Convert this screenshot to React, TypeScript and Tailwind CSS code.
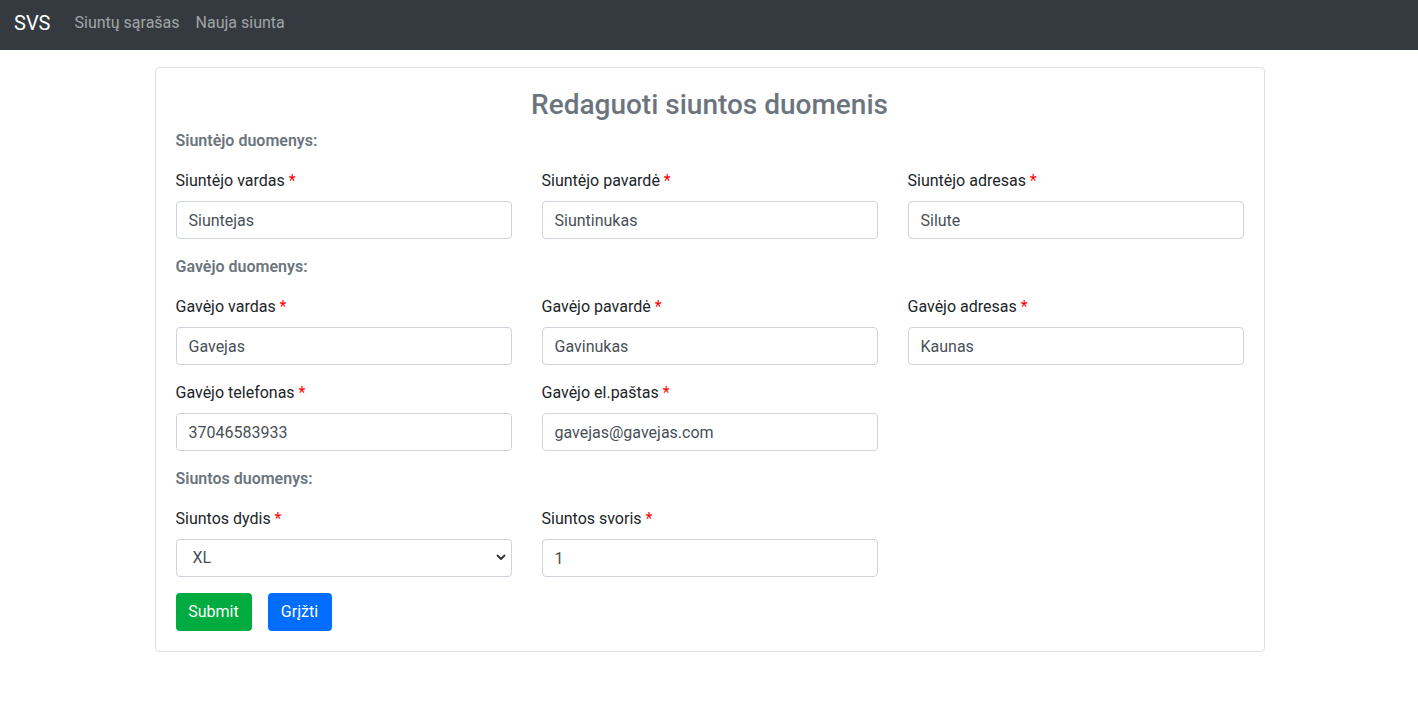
import React, { useState } from 'react';

type Field = { name: string; label: string; value: string; type?: string };

const font = { fontFamily: 'Roboto, "Liberation Sans", sans-serif' };

const Section: React.FC<{ title: string }> = ({ title }) => (
    <h6 className="mb-4 text-base leading-6 font-semibold text-[#6c757d]">{title}</h6>
);

const Input: React.FC<{ field: Field; onChange: (name: string, v: string) => void }> = ({ field, onChange }) => (
    <div>
        <label className="block mb-2 text-base leading-6 text-[#212529]">
            {field.label} <span className="text-[#ff0000]">*</span>
        </label>
        <input
            type={field.type || 'text'}
            name={field.name}
            value={field.value}
            onChange={(e) => onChange(field.name, e.target.value)}
            className="block w-full h-[38px] px-3 text-base text-[#495057] bg-white border border-[#ced4da] rounded-[4px] outline-none"
        />
    </div>
);

const App: React.FC = () => {
    const [formData, setFormData] = useState<Record<string, string>>({
        senderName: 'Siuntejas',
        senderSurname: 'Siuntinukas',
        senderAddress: 'Silute',
        receiverName: 'Gavejas',
        receiverSurname: 'Gavinukas',
        receiverAddress: 'Kaunas',
        receiverPhone: '37046583933',
        receiverEmail: 'gavejas@gavejas.com',
        size: 'XL',
        weight: '1',
    });

    const handleChange = (name: string, value: string) => {
        setFormData({ ...formData, [name]: value });
    };

    const f = (name: string, label: string, type?: string): Field => ({ name, label, value: formData[name], type });

    return (
        <div className="min-h-screen bg-white" style={font}>
            <nav className="h-[50px] bg-[#343a40] flex items-center px-[14px] pb-[5px]">
                <span className="text-[20px] text-white mr-4 leading-[30px]">SVS</span>
                <a className="px-2 text-base text-[#ffffff8c]">Siuntų sąrašas</a>
                <a className="px-2 text-base text-[#ffffff8c]">Nauja siunta</a>
            </nav>

            <div className="flex justify-center pl-px">
                <div className="w-[1110px] mt-[17px] border border-[#dee2e6] rounded-[4px] p-5">
                    <h2 className="mb-2 text-center text-[28px] leading-[33px] font-medium text-[#6c757d]">
                        Redaguoti siuntos duomenis
                    </h2>

                    <Section title="Siuntėjo duomenys:" />
                    <div className="grid grid-cols-3 gap-x-[30px] gap-y-4 mb-4">
                        <Input field={f('senderName', 'Siuntėjo vardas')} onChange={handleChange} />
                        <Input field={f('senderSurname', 'Siuntėjo pavardė')} onChange={handleChange} />
                        <Input field={f('senderAddress', 'Siuntėjo adresas')} onChange={handleChange} />
                    </div>

                    <Section title="Gavėjo duomenys:" />
                    <div className="grid grid-cols-3 gap-x-[30px] gap-y-4 mb-4">
                        <Input field={f('receiverName', 'Gavėjo vardas')} onChange={handleChange} />
                        <Input field={f('receiverSurname', 'Gavėjo pavardė')} onChange={handleChange} />
                        <Input field={f('receiverAddress', 'Gavėjo adresas')} onChange={handleChange} />
                        <Input field={f('receiverPhone', 'Gavėjo telefonas')} onChange={handleChange} />
                        <Input field={f('receiverEmail', 'Gavėjo el.paštas', 'email')} onChange={handleChange} />
                    </div>

                    <Section title="Siuntos duomenys:" />
                    <div className="grid grid-cols-3 gap-x-[30px] mb-4">
                        <div>
                            <label className="block mb-2 text-base leading-6 text-[#212529]">
                                Siuntos dydis <span className="text-[#ff0000]">*</span>
                            </label>
                            <div className="relative">
                                <select
                                    value={formData.size}
                                    onChange={(e) => handleChange('size', e.target.value)}
                                    className="block w-full h-[38px] pl-4 pr-8 appearance-none text-base text-[#495057] bg-white border border-[#ced4da] rounded-[4px] outline-none"
                                >
                                    <option>S</option>
                                    <option>M</option>
                                    <option>L</option>
                                    <option>XL</option>
                                </select>
                                <svg className="absolute right-[6px] top-[15px] pointer-events-none" width="10" height="7" viewBox="0 0 10 7">
                                    <path d="M1.5 1.5 L5 5 L8.5 1.5" fill="none" stroke="#333" strokeWidth="1.8" strokeLinecap="round" strokeLinejoin="round" />
                                </svg>
                            </div>
                        </div>
                        <Input field={f('weight', 'Siuntos svoris', 'number')} onChange={handleChange} />
                    </div>

                    <div className="flex gap-4">
                        <button className="h-[38px] w-[76px] rounded-[4px] bg-[#00ab40] text-white text-base">Submit</button>
                        <button className="h-[38px] w-[64px] rounded-[4px] bg-[#006dff] text-white text-base">Grįžti</button>
                    </div>
                </div>
            </div>
        </div>
    );
};

export default App;
